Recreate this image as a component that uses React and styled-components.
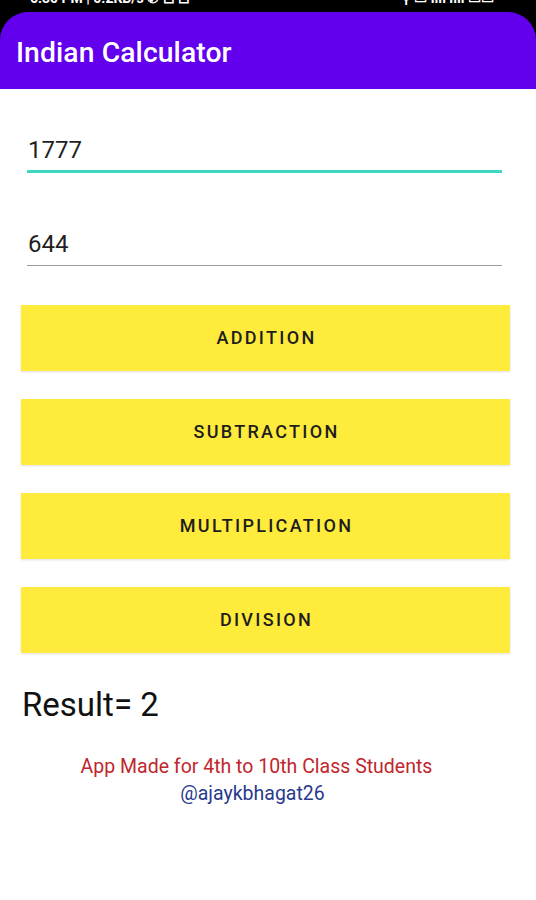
import React from "react";
import styled, { createGlobalStyle } from "styled-components";

const Global = createGlobalStyle`
  html, body { margin: 0; padding: 0; background: #ffffff; }
  body { font-family: Roboto, "Noto Sans", sans-serif; }
  * { box-sizing: border-box; }
`;

const Screen = styled.div`
  width: 536px;
  min-height: 900px;
  background: #ffffff;
  display: flex;
  flex-direction: column;
`;

const Header = styled.header`
  background: #000000;
  display: flex;
  flex-direction: column;
`;

const StatusBar = styled.div`
  height: 12px;
  overflow: hidden;
  display: flex;
  align-items: flex-end;
  justify-content: space-between;
  padding: 0 42px 7px 30px;
  color: #ffffff;
`;

const StatusText = styled.span`
  font-size: 14px;
  font-weight: 700;
  line-height: 14px;
  white-space: nowrap;
`;

const AppBar = styled.div`
  height: 77px;
  background: #6200ee;
  border-radius: 28px 28px 0 0;
  display: flex;
  align-items: center;
  padding: 4px 16px 0;
`;

const Title = styled.h1`
  margin: 0;
  color: #ffffff;
  font-size: 28.3px;
  font-weight: 500;
  letter-spacing: 0.1px;
`;

const Content = styled.main`
  display: flex;
  flex-direction: column;
  padding: 0 26px 0 21px;
`;

const Fields = styled.div`
  display: flex;
  flex-direction: column;
  gap: 53px;
  padding: 44px 8px 0 6px;
`;

const Field = styled.input`
  width: 100%;
  border: 0;
  outline: none;
  background: transparent;
  font-family: Roboto, sans-serif;
  font-size: 24px;
  color: #1f1f1f;
  height: 40px;
  padding: 0 0 3px 1px;
  border-bottom: ${(p) => (p.$focused ? "3px solid #3fd6c4" : "1.5px solid #9a9a9a")};
`;

const Buttons = styled.div`
  display: flex;
  flex-direction: column;
  gap: 28px;
  margin-top: 39px;
`;

const ActionButton = styled.button`
  height: 66px;
  border: 0;
  background: #ffeb3b;
  box-shadow: 0 1px 2px rgba(0, 0, 0, 0.12);
  font-family: Roboto, sans-serif;
  font-weight: 500;
  font-size: 18px;
  letter-spacing: 2.3px;
  color: #1d1d1d;
  text-transform: uppercase;
  padding: 0 0 2px 2px;
`;

const Result = styled.div`
  margin-top: 32px;
  margin-left: 1px;
  font-size: 33px;
  color: #111111;
  line-height: 40px;
`;

const Footer = styled.div`
  margin-top: 28px;
  display: flex;
  flex-direction: column;
  align-items: center;
  font-size: 19.5px;
  line-height: 27px;
  padding-right: 18px;
`;

const Credit = styled.span`
  color: ${(p) => p.$color};
  margin-left: ${(p) => p.$shift || 0}px;
`;

export default function App() {
  return (
    <>
      <Global />
      <Screen>
        <Header>
          <StatusBar>
            <StatusText>6:30 PM | 0.2KB/s ✆ ⊡ ⊡</StatusText>
            <StatusText>⚲ ▭ ıııl ıııl ▭▭</StatusText>
          </StatusBar>
          <AppBar>
            <Title>Indian Calculator</Title>
          </AppBar>
        </Header>
        <Content>
          <Fields>
            <Field $focused defaultValue="1777" readOnly />
            <Field defaultValue="644" readOnly />
          </Fields>
          <Buttons>
            <ActionButton>Addition</ActionButton>
            <ActionButton>Subtraction</ActionButton>
            <ActionButton>Multiplication</ActionButton>
            <ActionButton>Division</ActionButton>
          </Buttons>
          <Result>Result= 2</Result>
          <Footer>
            <Credit $color="#c0262d">App Made for 4th to 10th Class Students</Credit>
            <Credit $color="#283a8e" $shift={-8}>@ajaykbhagat26</Credit>
          </Footer>
        </Content>
      </Screen>
    </>
  );
}
